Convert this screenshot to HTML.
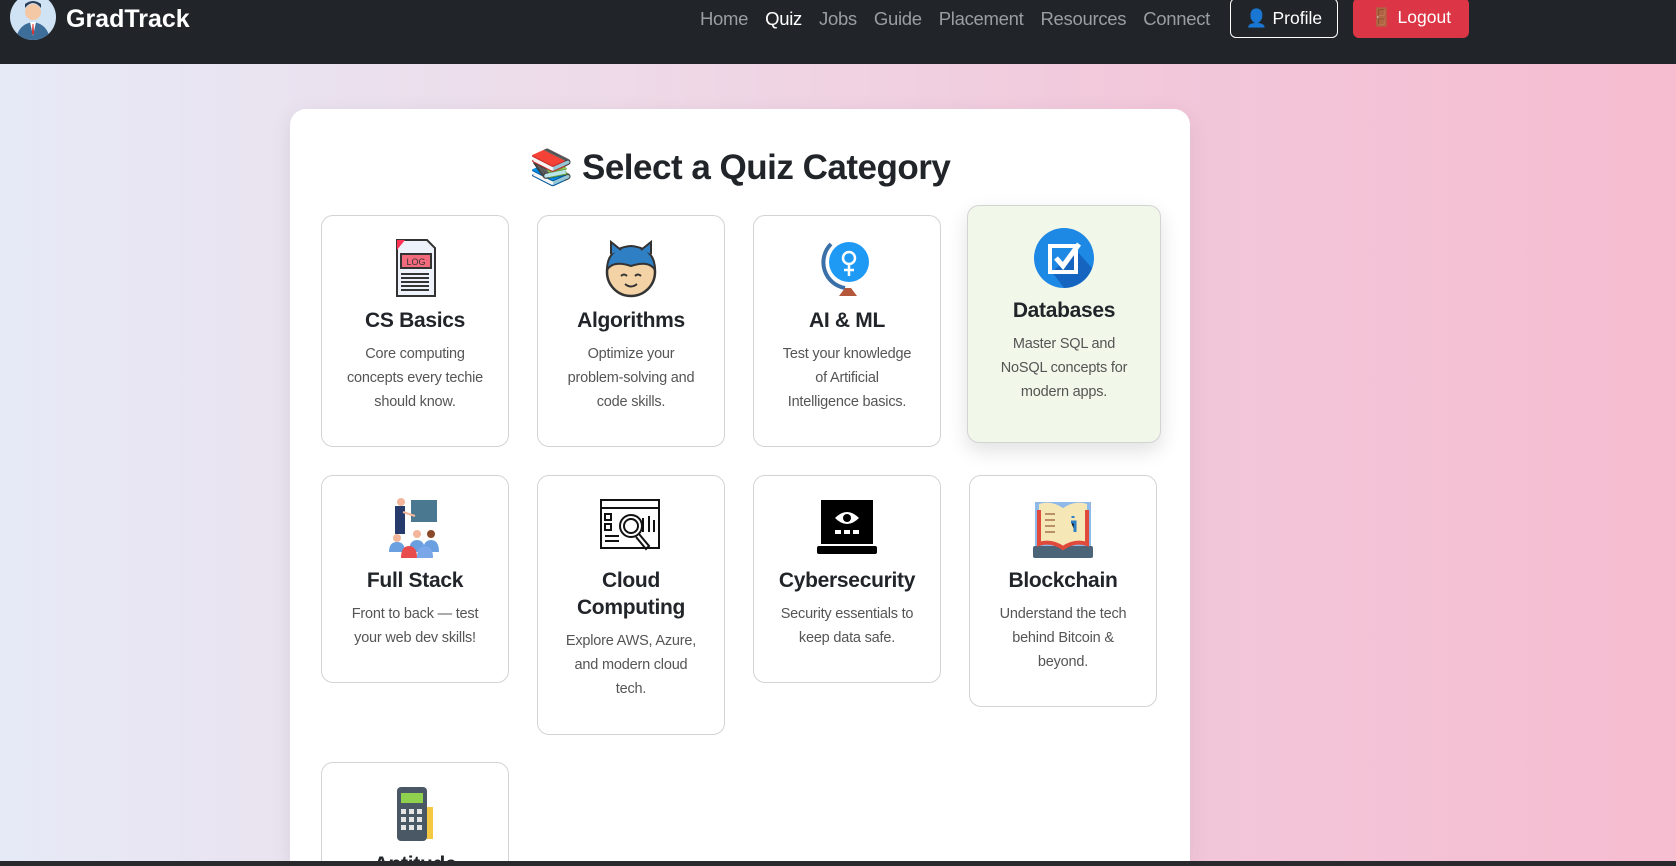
<!DOCTYPE html>
<html><head><meta charset="utf-8"><style>
*{box-sizing:border-box;margin:0;padding:0}
html{width:1676px;height:866px;overflow:hidden}
body{width:1676px;height:866px;overflow:hidden;font-family:"Liberation Sans","DejaVu Sans",sans-serif;background:linear-gradient(90deg,#e6eaf6 0%,#eedbe9 35%,#f2c7da 70%,#f6bcd0 100%);position:relative}
.nav{position:absolute;left:0;top:0;width:1676px;height:64px;background:#212529}
.brand{position:absolute;left:66px;top:5px;color:#fff;font-weight:bold;font-size:25px}
.av{position:absolute;left:10px;top:-6px;width:46px;height:46px;border-radius:50%;background:#cfe3f5;overflow:hidden}
.links{position:absolute;left:700px;top:8px;font-size:18.5px;color:#9a9da1;letter-spacing:-0.3px}
.links span{margin-right:17px}
.links .a{color:#fff}
.btn{position:absolute;top:-2px;height:40px;border-radius:6px;color:#fff;font-size:17.5px;line-height:38px;text-align:center}
.pro{left:1230px;width:108px;border:1px solid #fff}
.out{left:1353px;width:116px;background:#dc3545}
.clip{position:absolute;left:0;top:0;width:1676px;height:861px;overflow:hidden}
.box{position:absolute;left:290px;top:109px;width:900px;height:752px;background:#fff;border-radius:16px 16px 0 0;box-shadow:0 6px 24px rgba(0,0,0,.08);overflow:hidden}
h1{position:absolute;left:0;width:900px;top:38px;text-align:center;font-size:35px;font-weight:bold;color:#212529;letter-spacing:-0.5px}
.card{position:absolute;width:188px;border:1px solid #d3d3d3;border-radius:12px;background:#fff;text-align:center;padding-top:20px}
.card svg{width:64px;height:64px;display:block;margin:0 auto}
.card h3{font-size:21px;font-weight:bold;color:#212529;margin-top:7px;line-height:27px;letter-spacing:-0.3px}
.card p{font-size:14.5px;color:#555;line-height:24px;margin:8px 0 0;white-space:nowrap;letter-spacing:-0.2px}
.hov{background:#f1f7e9;box-shadow:0 8px 20px rgba(0,0,0,.12)}
.bot{position:absolute;left:0;top:861px;width:1676px;height:5px;background:#2a2a2e}
</style></head><body>
<div class="clip">
<div class="box">
<h1>📚 Select a Quiz Category</h1>
<div class="card" style="left:31px;top:106px;height:232px"><svg viewBox="0 0 64 64"><path d="M14 4h30l8 8v48H14z" fill="#eef2fa" stroke="#333" stroke-width="2"/><path d="M14 4v10l8-10z" fill="#f35"/><rect x="18" y="18" width="30" height="14" fill="#f46a7d" stroke="#333" stroke-width="2"/><text x="33" y="29" font-size="9" text-anchor="middle" font-family="Liberation Sans" fill="#333">LOG</text><path d="M18 38h28M18 42h28M18 46h28M18 50h28M18 54h28" stroke="#333" stroke-width="2"/></svg><h3>CS Basics</h3><p>Core computing<br>concepts every techie<br>should know.</p></div>
<div class="card" style="left:247px;top:106px;height:232px"><svg viewBox="0 0 64 64"><circle cx="32" cy="36" r="24" fill="#f3d2a6" stroke="#333" stroke-width="2.5"/><path d="M8 34q0-22 24-24q24 2 24 24q-6-10-24-4q-18-6-24 4z" fill="#2f7fc4" stroke="#333" stroke-width="2"/><path d="M12 18l0-12 10 8M52 18l0-12-10 8" fill="#2f7fc4" stroke="#333" stroke-width="2"/><path d="M22 40q3-3 6 0M36 40q3-3 6 0M26 48q6 5 12 0" stroke="#333" stroke-width="2" fill="none"/></svg><h3>Algorithms</h3><p>Optimize your<br>problem-solving and<br>code skills.</p></div>
<div class="card" style="left:463px;top:106px;height:232px"><svg viewBox="0 0 64 64"><circle cx="34" cy="26" r="20" fill="#1e9af5"/><path d="M16 8a26 26 0 0 0 14 44" stroke="#3b6fa8" stroke-width="4" fill="none"/><circle cx="34" cy="22" r="6" fill="none" stroke="#fff" stroke-width="2.5"/><path d="M34 28v12M29 34h10" stroke="#fff" stroke-width="2.5"/><path d="M24 60l6-8h6l6 8z" fill="#b5573a"/></svg><h3>AI &amp; ML</h3><p>Test your knowledge<br>of Artificial<br>Intelligence basics.</p></div>
<div class="card hov" style="left:677px;top:96px;height:238px;width:194px"><svg viewBox="0 0 64 64"><circle cx="32" cy="32" r="30" fill="#1e88e5"/><path d="M32 62a30 30 0 0 0 28-20L44 24 20 46z" fill="#1565c0"/><rect x="18" y="20" width="26" height="26" fill="none" stroke="#fff" stroke-width="4"/><path d="M24 32l7 8 16-22" stroke="#fff" stroke-width="5" fill="none"/></svg><h3>Databases</h3><p>Master SQL and<br>NoSQL concepts for<br>modern apps.</p></div>
<div class="card" style="left:31px;top:366px;height:208px"><svg viewBox="0 0 64 64"><rect x="28" y="4" width="26" height="22" fill="#4a7891"/><circle cx="18" cy="6" r="4" fill="#f4b69a"/><rect x="12" y="10" width="10" height="28" fill="#263a6b"/><path d="M20 16l12 4" stroke="#f4b69a" stroke-width="2"/><circle cx="34" cy="38" r="4" fill="#f4b69a"/><circle cx="48" cy="38" r="4" fill="#8a4a2a"/><circle cx="14" cy="42" r="4" fill="#f4b69a"/><path d="M6 56q0-10 8-10 8 0 8 10zM26 56q0-12 8-12 8 0 8 12zM40 56q0-12 8-12 8 0 8 12z" fill="#6aa0e0"/><path d="M18 62q0-12 8-12 8 0 8 12z" fill="#e84c4c"/><path d="M34 62q0-12 8-12 8 0 8 12z" fill="#7aa7e8"/></svg><h3>Full Stack</h3><p>Front to back — test<br>your web dev skills!</p></div>
<div class="card" style="left:247px;top:366px;height:260px"><svg viewBox="0 0 64 64" fill="none" stroke="#111" stroke-width="2"><rect x="2" y="4" width="58" height="48"/><path d="M2 12h58"/><rect x="6" y="18" width="6" height="6"/><rect x="6" y="28" width="6" height="6"/><path d="M6 40h14M6 45h14"/><circle cx="32" cy="30" r="11"/><circle cx="32" cy="30" r="7"/><path d="M40 38l10 12-3 3-10-12M44 22v14M50 20v16M55 24v12"/></svg><h3>Cloud<br>Computing</h3><p>Explore AWS, Azure,<br>and modern cloud<br>tech.</p></div>
<div class="card" style="left:463px;top:366px;height:208px"><svg viewBox="0 0 64 64"><rect x="6" y="4" width="52" height="44" fill="#000"/><path d="M20 22q12-12 24 0q-12 12-24 0z" fill="#fff"/><circle cx="32" cy="22" r="4" fill="#000"/><rect x="20" y="34" width="6" height="4" fill="#fff"/><rect x="29" y="34" width="6" height="4" fill="#fff"/><rect x="38" y="34" width="6" height="4" fill="#fff"/><rect x="2" y="50" width="60" height="8" rx="2" fill="#000"/></svg><h3>Cybersecurity</h3><p>Security essentials to<br>keep data safe.</p></div>
<div class="card" style="left:679px;top:366px;height:232px"><svg viewBox="0 0 64 64"><rect x="4" y="6" width="56" height="48" fill="#8eb9e8"/><rect x="2" y="50" width="60" height="12" rx="2" fill="#4c6478"/><path d="M8 8q12-4 24 4q12-8 24-4v40q-12-4-24 4q-12-8-24-4z" fill="#f6e7b6"/><path d="M8 14v34q12-4 24 4q12-8 24-4V14" stroke="#e04a3a" stroke-width="4" fill="none"/><path d="M14 18h10M14 24h10M14 30h10M14 36h10" stroke="#b9906a" stroke-width="2"/><path d="M42 20v2M40 26h4v10" stroke="#2f7fc4" stroke-width="3"/></svg><h3>Blockchain</h3><p>Understand the tech<br>behind Bitcoin &amp;<br>beyond.</p></div>
<div class="card" style="left:31px;top:653px;height:200px;padding-top:18px"><svg viewBox="0 0 64 64"><rect x="36" y="26" width="14" height="32" fill="#f5c842"/><rect x="14" y="6" width="30" height="54" rx="4" fill="#4a5866"/><rect x="18" y="12" width="22" height="10" fill="#8fd14f"/><g fill="#e5e5e5"><rect x="18" y="28" width="5" height="5"/><rect x="26" y="28" width="5" height="5"/><rect x="34" y="28" width="5" height="5"/><rect x="18" y="36" width="5" height="5"/><rect x="26" y="36" width="5" height="5"/><rect x="34" y="36" width="5" height="5"/><rect x="18" y="44" width="5" height="5"/><rect x="26" y="44" width="5" height="5"/><rect x="34" y="44" width="5" height="5"/></g></svg><h3 style="margin-top:6px">Aptitude</h3></div>
</div>
</div>
<div class="nav">
<div class="av"><svg width="46" height="46" viewBox="0 0 46 46"><circle cx="23" cy="18" r="8" fill="#f4c7a5"/><path d="M15 14q8-10 16 0v-4q-8-6-16 0z" fill="#2b3c55"/><path d="M6 46q2-16 17-18q15 2 17 18z" fill="#3d6e99"/><path d="M20 28h6l-3 14z" fill="#fff"/><path d="M22.5 30h1l.6 9-1.1 2-1.1-2z" fill="#d33"/></svg></div>
<div class="brand">GradTrack</div>
<div class="links"><span>Home</span><span class="a">Quiz</span><span>Jobs</span><span>Guide</span><span>Placement</span><span>Resources</span><span>Connect</span></div>
<div class="btn pro">👤 Profile</div>
<div class="btn out">🚪 Logout</div>
</div>
<div class="bot"></div>
</body></html>
